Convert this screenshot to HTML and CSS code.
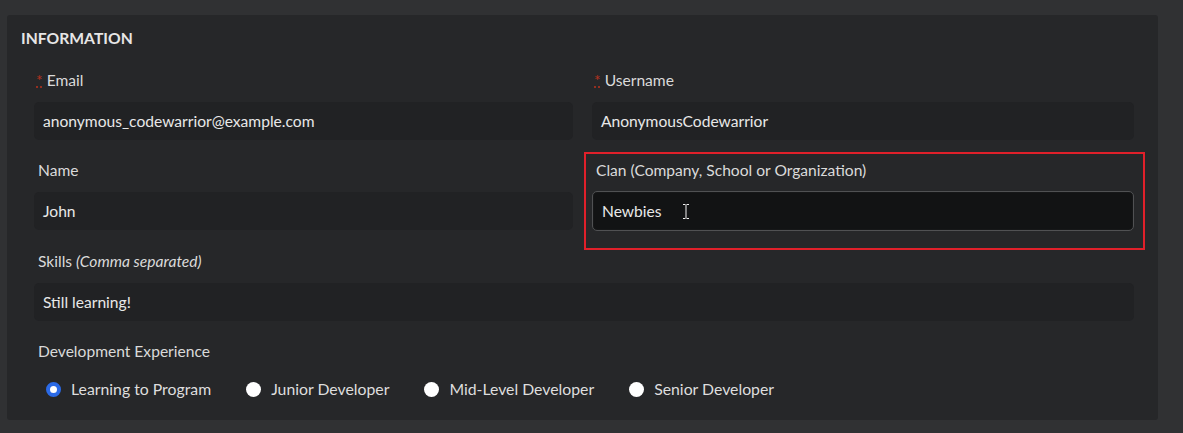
FILE: index.html
```html
<!DOCTYPE html>
<html lang="en">
<head>
    <link rel="stylesheet" href="styles.css">
</head>
<body>
    <div class="panel">
        <h2 class="title">Information</h2>
        <div class="form">
            <div class="field">
                <label class="label"><abbr class="req">*</abbr>Email</label>
                <div class="input">anonymous_codewarrior@example.com</div>
            </div>
            <div class="field">
                <label class="label"><abbr class="req">*</abbr>Username</label>
                <div class="input">AnonymousCodewarrior</div>
            </div>
            <div class="field">
                <label class="label">Name</label>
                <div class="input">John</div>
            </div>
            <div class="field focus">
                <label class="label">Clan (Company, School or Organization)</label>
                <div class="input active">Newbies
                    <svg class="caret" width="8" height="15" viewBox="0 0 8 15">
                        <path d="M1 0.5h2.5M4.5 0.5h2.5M4 1v13M1 14.5h2.5M4.5 14.5h2.5" stroke="#f2f2f2" stroke-width="1" fill="none"/>
                    </svg>
                </div>
                <div class="highlight"></div>
            </div>
            <div class="field wide">
                <label class="label">Skills <em>(Comma separated)</em></label>
                <div class="input">Still learning!</div>
            </div>
            <div class="field wide">
                <label class="label">Development Experience</label>
                <div class="radios">
                    <span class="radio"><span class="dot checked"></span>Learning to Program</span>
                    <span class="radio"><span class="dot"></span>Junior Developer</span>
                    <span class="radio"><span class="dot"></span>Mid-Level Developer</span>
                    <span class="radio"><span class="dot"></span>Senior Developer</span>
                </div>
            </div>
        </div>
    </div>
</body>
</html>
```

FILE: styles.css
```css
body {
    margin: 0;
    background-color: #303133;
    font-family: Lato, "Noto Sans", sans-serif;
    font-size: 15.6px;
    color: #dcdcdc;
    padding: 15px 25px 0 7px;
}
.panel {
    background-color: #262729;
    border-radius: 3px;
    padding: 12px 24px 21px 14px;
    height: 372px;
}
.title {
    margin: 0 0 21px 0;
    font-size: 15.7px;
    line-height: 22px;
    font-weight: bold;
    text-transform: uppercase;
    color: #e6e6e6;
}
.form {
    display: grid;
    grid-template-columns: 539px 1fr;
    column-gap: 19px;
    row-gap: 20px;
    padding-left: 13px;
}
.field {
    position: relative;
}
.wide {
    grid-column: 1 / 3;
}
.label {
    display: block;
    line-height: 20px;
    margin: 0 0 12px 4px;
    color: #dadada;
}
.req {
    color: #b3321f;
    text-decoration: underline dotted #b3321f;
    margin-right: 4px;
    margin-left: -2px;
}
.input {
    height: 38px;
    line-height: 39px;
    background-color: #212224;
    border-radius: 5px;
    padding: 0 9px;
    color: #e8e8e8;
    box-sizing: border-box;
}
.active {
    height: 40px;
    margin-top: -1px;
    line-height: 38px;
    background-color: #121314;
    border: 1px solid #505153;
    box-shadow: inset 0 0 2px rgba(255, 255, 255, 0.08);
    position: relative;
}
.caret {
    position: absolute;
    left: 89px;
    top: 12px;
}
.highlight {
    position: absolute;
    left: -8px;
    top: -8px;
    right: -11px;
    bottom: -19px;
    border: 2px solid #e0202a;
    pointer-events: none;
}
.radios {
    display: flex;
    gap: 35px;
    padding: 6px 0 0 12px;
}
.radio {
    display: flex;
    align-items: center;
    gap: 10px;
    line-height: 20px;
    font-size: 15.8px;
    color: #dedede;
}
.dot {
    width: 15px;
    height: 15px;
    border-radius: 50%;
    background-color: #ffffff;
    box-sizing: border-box;
}
.checked {
    background-color: #ffffff;
    border: 4.5px solid #2b6ae6;
}
```
